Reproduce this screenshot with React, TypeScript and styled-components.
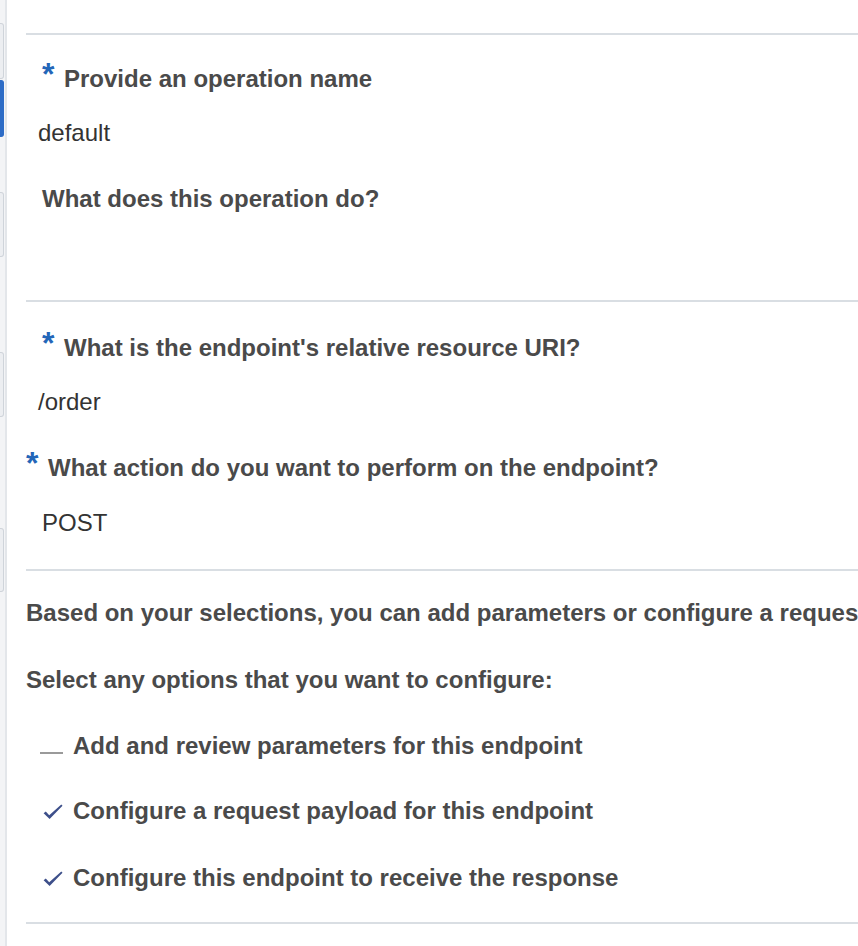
import React from "react";
import styled, { createGlobalStyle } from "styled-components";

const GlobalStyle = createGlobalStyle`
  html, body {
    margin: 0;
    padding: 0;
    background: #ffffff;
  }
  body {
    font-family: "Liberation Sans", Arial, Helvetica, sans-serif;
  }
`;

const Page = styled.div`
  display: flex;
  width: 858px;
  height: 946px;
  overflow: hidden;
  background: #ffffff;
`;

const Sidebar = styled.nav`
  flex: 0 0 5px;
  display: flex;
  flex-direction: column;
  background: #f3f4f6;
  border-right: 2px solid #e3e6ea;
`;

const Tab = styled.div<{ $top: number; $h: number; $active?: boolean }>`
  margin-top: ${(p) => p.$top}px;
  height: ${(p) => p.$h}px;
  width: 4px;
  box-sizing: border-box;
  border: 1px solid ${(p) => (p.$active ? "#2d6cc6" : "#cfd4da")};
  border-left: none;
  border-radius: 0 3px 3px 0;
  background: ${(p) => (p.$active ? "#2d6cc6" : "#eceef1")};
`;

const Main = styled.main`
  flex: 1;
  min-width: 0;
  padding: 33px 0 0 19px;
  overflow: hidden;
  display: flex;
  flex-direction: column;
`;

const Section = styled.section<{ $pt: number; $pb: number; $last?: boolean }>`
  display: flex;
  flex-direction: column;
  border-top: 2px solid #d9dee3;
  ${(p) => (p.$last ? "border-bottom: 2px solid #d9dee3;" : "")}
  padding: ${(p) => p.$pt}px 0 ${(p) => p.$pb}px 0;
`;

const Field = styled.div<{ $gap?: number; $mt?: number }>`
  display: flex;
  flex-direction: column;
  gap: ${(p) => p.$gap ?? 27}px;
  margin-top: ${(p) => p.$mt ?? 0}px;
`;

const Label = styled.div<{ $indent: number }>`
  height: 28px;
  line-height: 28px;
  padding-left: ${(p) => p.$indent}px;
  font-size: 24px;
  font-weight: 700;
  color: #4a4a4a;
  white-space: nowrap;
`;

const Required = styled.span`
  display: inline-block;
  width: 22px;
  color: #2366b8;
  font-size: 32px;
  font-weight: 700;
  vertical-align: 2px;
  line-height: 20px;
`;

const Value = styled.div<{ $indent: number }>`
  height: 28px;
  line-height: 28px;
  padding-left: ${(p) => p.$indent}px;
  font-size: 24px;
  font-weight: 400;
  color: #333333;
  white-space: nowrap;
`;

const EmptyArea = styled.div`
  height: 30px;
`;

const Option = styled.div<{ $mt?: number }>`
  display: flex;
  align-items: center;
  height: 28px;
  margin-top: ${(p) => p.$mt ?? 0}px;
  padding-left: 14px;
  font-size: 24px;
  font-weight: 700;
  color: #4a4a4a;
  white-space: nowrap;
`;

const Marker = styled.span`
  flex: 0 0 33px;
  height: 28px;
  display: flex;
  align-items: center;
`;

const Blank = styled.span`
  display: block;
  width: 23px;
  height: 0;
  margin-top: 14px;
  border-bottom: 2px solid #9a9a9a;
`;

const CheckIcon = styled.svg`
  margin-left: 3px;
  margin-top: 1px;
`;

const Check = () => (
  <CheckIcon width="20" height="16" viewBox="0 0 20 16">
    <path
      d="M0.6 9.2 L2.8 7.4 L6.2 11.2 L18.3 0.5 L19.5 1.7 L6.6 15 Z"
      fill="#3d4f8a"
    />
  </CheckIcon>
);

export default function App() {
  return (
    <>
      <GlobalStyle />
      <Page>
        <Sidebar>
          <Tab $top={23} $h={56} />
          <Tab $top={1} $h={57} $active />
          <Tab $top={55} $h={65} />
          <Tab $top={95} $h={65} />
          <Tab $top={111} $h={64} />
        </Sidebar>
        <Main>
          <Section $pt={29} $pb={30}>
            <Field>
              <Label $indent={16}>
                <Required>*</Required>Provide an operation name
              </Label>
              <Value $indent={12}>default</Value>
            </Field>
            <Field $mt={38}>
              <Label $indent={16}>What does this operation do?</Label>
              <EmptyArea />
            </Field>
          </Section>
          <Section $pt={31} $pb={32}>
            <Field>
              <Label $indent={16}>
                <Required>*</Required>What is the endpoint's relative resource URI?
              </Label>
              <Value $indent={12}>/order</Value>
            </Field>
            <Field $gap={28} $mt={37}>
              <Label $indent={0}>
                <Required>*</Required>What action do you want to perform on the endpoint?
              </Label>
              <Value $indent={16}>POST</Value>
            </Field>
          </Section>
          <Section $pt={28} $pb={30} $last>
            <Label $indent={0}>
              Based on your selections, you can add parameters or configure a request payload for this endpoint.
            </Label>
            <Field $gap={38} $mt={39}>
              <Label $indent={0}>Select any options that you want to configure:</Label>
              <Option>
                <Marker>
                  <Blank />
                </Marker>
                Add and review parameters for this endpoint
              </Option>
              <Option $mt={-1}>
                <Marker>
                  <Check />
                </Marker>
                Configure a request payload for this endpoint
              </Option>
              <Option $mt={1}>
                <Marker>
                  <Check />
                </Marker>
                Configure this endpoint to receive the response
              </Option>
            </Field>
          </Section>
        </Main>
      </Page>
    </>
  );
}
